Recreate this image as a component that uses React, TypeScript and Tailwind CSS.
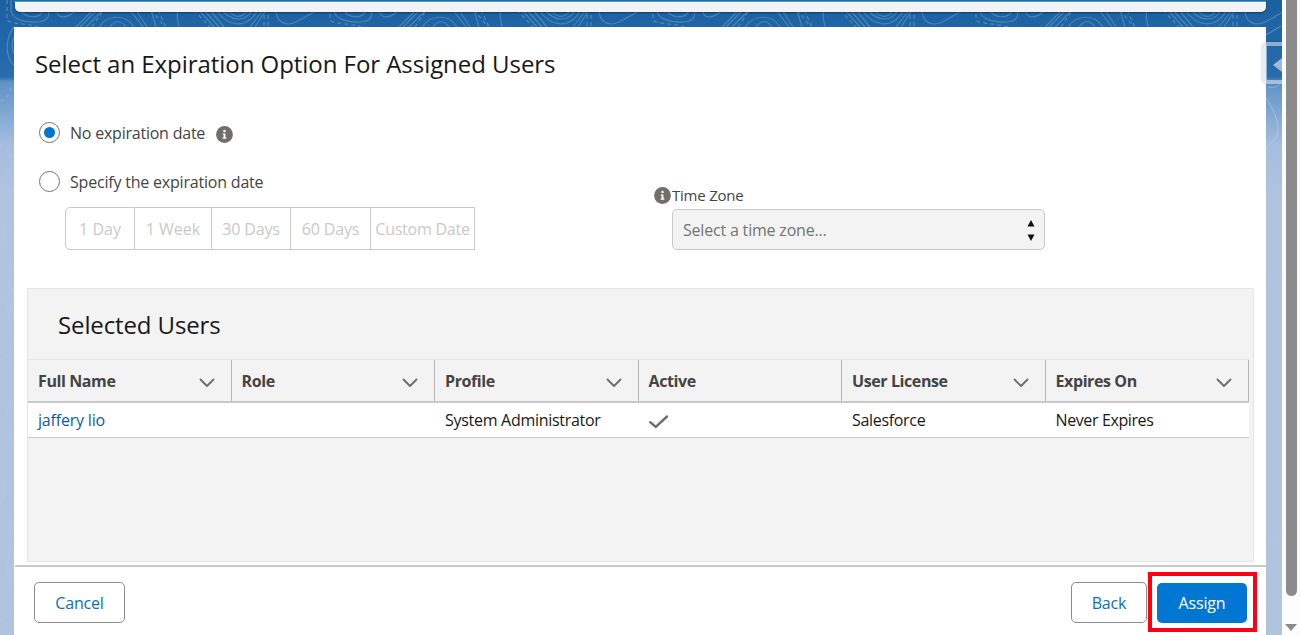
import React from 'react';

const columns = [
  { label: 'Full Name', sortable: true },
  { label: 'Role', sortable: true },
  { label: 'Profile', sortable: true },
  { label: 'Active', sortable: false },
  { label: 'User License', sortable: true },
  { label: 'Expires On', sortable: true },
];

const durations = [
  { label: '1 Day', className: 'w-[70px] rounded-l-[5px] border-l' },
  { label: '1 Week', className: 'w-[77px]' },
  { label: '30 Days', className: 'w-[79px] tracking-[-0.01em]' },
  { label: '60 Days', className: 'w-[80px] tracking-[-0.01em]' },
  { label: 'Custom Date', className: 'w-[104px] tracking-[-0.015em]' },
];

const InfoIcon = () => (
  <svg viewBox="0 0 16 16" className="block h-[17px] w-[17px] shrink-0">
    <circle cx="8" cy="8" r="7.9" fill="#706e6b" />
    <circle cx="8" cy="4.7" r="1.15" fill="#fff" />
    <path d="M6.3 7h2.6v3.9h.9v1H6.2v-1h.9V8h-.8z" fill="#fff" />
  </svg>
);

// Repeating contour lines behind the cards
const ContourPattern = () => (
  <svg className="absolute inset-0 h-[635px] w-[1282px]" fill="none">
    <defs>
      <pattern id="contours" width="323" height="260" patternUnits="userSpaceOnUse">
        <g stroke="#a9cdec" strokeOpacity=".3" strokeWidth="1.2" fill="none">
          <path d="M11 0V10C11 20 28 23 38 22S50 16 48 10" />
          <path d="M21 10C24 18 40 20 43 10M14 27C8 34 6 46 8 54C9 60 12 64 15 66M15 36C11 42 11 50 15 56" />
          <path d="M57 12C58 19 67 18 74 12M80 27L97 10M76 27L91 12M86 27L103 10" />
          <path d="M99 27C108 14 126 14 134 27M110 27C115 20 121 20 126 27" />
          <path d="M130 10L143 27M136 10L147 27M151 10L156 27M178 10C176 16 178 22 179 27" />
          <path d="M199 10L214 27M204 10L219 27M210 10L224 27M216 10C228 27 246 30 258 10" />
          <path d="M222 10C232 22 246 22 252 10M228 10C235 19 243 18 247 10M250 27L263 10M255 27L266 10" />
          <path d="M276 10C276 22 286 27 296 22S310 14 318 10" />
          <path d="M15 146C8 142 6 150 8 154S13 155 15 154M0 178C8 176 11 170 15 167M0 187C9 184 12 178 15 175M0 196C9 192 12 187 15 184M0 220C7 222 5 239 0 245" />
        </g>
        <g stroke="#a9cdec" strokeOpacity=".35" strokeWidth="1.2" strokeDasharray="4 3" fill="none">
          <path d="M7 0V20C9 24 28 23 42 28M92 27L102 12M151 10L165 27M158 10L166 27M194 10L210 27M268 8V27M264 8V27M0 101Q9 98 11 88" />
        </g>
      </pattern>
    </defs>
    <rect width="1282" height="635" fill="url(#contours)" />
    <path
      d="M1266 98C1275 112 1281 126 1276 137C1273 143 1269 144 1266 148M1266 35L1281 26M1268 87Q1275 89 1281 83"
      stroke="#c5daee"
      strokeOpacity=".45"
    />
  </svg>
);

const Radio = ({ checked = false }: { checked?: boolean }) => (
  <span className="flex h-[21px] w-[21px] shrink-0 items-center justify-center rounded-full border border-[#747474] bg-white">
    {checked && <span className="h-[11px] w-[11px] rounded-full bg-[#0176d3]" />}
  </span>
);

const ExpirationOptions = () => (
  <div className="flex h-[210px] justify-between pr-[221px] pl-6">
    <div>
      <div className="mt-[43px] flex h-[21px] items-center">
        <Radio checked />
        <span className="ml-[10px] tracking-[-0.014em]">No expiration date</span>
        <span className="mt-[3px] ml-[11px]">
          <InfoIcon />
        </span>
      </div>
      <div className="mt-7 flex h-[21px] items-center">
        <Radio />
        <span className="ml-[10px] tracking-[-0.0125em]">Specify the expiration date</span>
      </div>
      <div className="mt-[15px] ml-[26px] flex h-[43px]">
        {durations.map(({ label, className }) => (
          <button
            key={label}
            disabled
            className={`flex items-center justify-center border-y border-r border-[#c9c9c9] text-[#c9c9c9] ${className}`}
          >
            {label}
          </button>
        ))}
      </div>
    </div>
    <div className="mt-[106px] w-[391px]">
      <div className="flex h-5 items-center">
        <InfoIcon />
        <span className="ml-px text-[15px] tracking-[-0.015em]">Time Zone</span>
      </div>
      <div className="mt-[4px] ml-[18px] flex h-[41px] items-center justify-between rounded-[5px] border border-[#c9c9c9] bg-[#f3f3f3] pr-[9px] pl-[10px] text-[#747474]">
        <span className="tracking-[-0.012em]">Select a time zone...</span>
        <svg viewBox="0 0 8 22" className="h-[22px] w-2" fill="#111">
          <path d="M.5 7.500L4 1L7.500 7.500zM.5 15.500H7.500L4 22z" />
        </svg>
      </div>
    </div>
  </div>
);

const SelectedUsers = () => (
  <section className="-mt-px ml-3 h-[274px] w-[1227px] border border-[#e5e5e5] bg-[#f3f3f3]">
    <h2 className="flex h-[70px] items-center pt-[2px] pl-[30px] text-[24px] tracking-[-0.005em] text-[#181818]">
      Selected Users
    </h2>
    <div className="w-[1221px]">
      <div className="grid h-[44px] grid-cols-6 border-t border-b-2 border-t-[#e5e5e5] border-b-[#c9c9c9]">
        {columns.map(({ label, sortable }) => (
          <div
            key={label}
            className="flex items-center justify-between border-r border-[#b5b5b5] pt-px pr-4 pl-[10px] font-bold tracking-[-0.025em] text-[#444]"
          >
            <span>{label}</span>
            {sortable && (
              <svg viewBox="0 0 16 10" className="mt-[3px] h-[10px] w-4" fill="none">
                <path d="M1.500 1.500L8 8L14.500 1.500" stroke="#706e6b" strokeWidth="1.900" strokeLinecap="round" strokeLinejoin="round" />
              </svg>
            )}
          </div>
        ))}
      </div>
      <div className="grid h-[35px] grid-cols-6 items-center border-b border-[#c9c9c9] bg-white tracking-[-0.02em] text-[#181818]">
        <a href="#" className="pl-[10px] tracking-[-0.012em] text-[#0b5cab]">jaffery lio</a>
        <span />
        <span className="pl-[10px] tracking-[-0.018em]">System Administrator</span>
        <span className="pl-[10px]">
          <svg viewBox="0 0 20 14" className="mt-1 h-[14px] w-5" fill="none">
            <path d="M1.200 7.200L6.800 12L18 1.500" stroke="#706e6b" strokeWidth="2.400" strokeLinecap="round" />
          </svg>
        </span>
        <span className="pl-[10px]">Salesforce</span>
        <span className="pl-[10px] tracking-[-0.024em]">Never Expires</span>
      </div>
    </div>
  </section>
);

const Footer = () => (
  <footer className="mt-[3px] flex h-[70px] border-t-2 border-[#c9c9c9] pr-[9px] pl-[19px]">
    <button className="mt-[15px] h-[41px] w-[91px] rounded-[5px] border border-[#8c8c8c] tracking-[-0.01em] text-[#0b6dc7]">
      Cancel
    </button>
    <button className="mt-[15px] mr-px ml-auto h-[41px] w-[76px] rounded-[5px] border border-[#8c8c8c] tracking-[-0.01em] text-[#0b6dc7]">
      Back
    </button>
    <div className="mt-[5px] flex h-[60px] w-[109px] items-center justify-center border-4 border-[#ff0012]">
      <button className="mt-[2px] mr-px h-10 w-[90px] rounded-[5px] bg-[#0176d3] tracking-[-0.01em] text-white">
        Assign
      </button>
    </div>
  </footer>
);

const Scrollbar = () => (
  <div className="flex w-[18px] flex-col items-center bg-[#fcfcfc]">
    <div className="h-[596px] w-[11px] rounded-b-full bg-[#8b8b8b]" />
    <svg viewBox="0 0 12 7" className="mt-[28px] h-[7px] w-3" fill="#8b8b8b">
      <path d="M0 0H12L6 7z" />
    </svg>
  </div>
);

const App: React.FC = () => {
  return (
    <div className="flex h-[635px] w-[1300px] overflow-hidden font-['Open_Sans','Noto_Sans',sans-serif] text-[16px] leading-5 text-[#444]">
      <div className="relative h-full w-[1282px] overflow-hidden bg-[linear-gradient(to_bottom,#1b609f_0px,#2267a9_45px,#2a6cad_77px,#5f92c5_82px,#86abd5_118px,#a5bddf_145px,#b0c4df_200px)]">
        <ContourPattern />
        <div className="relative mr-4 ml-[14px]">
          <div className="h-[2px] border-b border-[#5a9cc8] bg-[#1b6d9f]" />
          <div className="ml-px h-[10px] rounded-b-[5px] bg-[#f3f3f3] shadow-[0_1px_2px_rgba(0,0,0,0.4)]" />
          <main className="mt-[15px] h-[608px] bg-white pl-px">
            <h1 className="flex h-[52px] items-center pt-[21px] pl-5 text-[24px] tracking-[-0.002em] text-[#181818]">
              Select an Expiration Option For Assigned Users
            </h1>
            <ExpirationOptions />
            <SelectedUsers />
            <Footer />
          </main>
        </div>
        {/* Collapsed side panel handle */}
        <div className="absolute top-[42px] right-0 flex h-[42px] w-[20px] items-center justify-end rounded-l-[5px] border-y-4 border-l-[5px] border-[#d5dfeb]/60 shadow-[0_0_3px_rgba(0,0,0,0.2)]">
          <svg viewBox="0 0 9 14" className="mt-1 h-[14px] w-[9px]" fill="#9dbbd9">
            <path d="M9 0V14L0 7z" />
          </svg>
        </div>
      </div>
      <Scrollbar />
    </div>
  );
};

export default App;
